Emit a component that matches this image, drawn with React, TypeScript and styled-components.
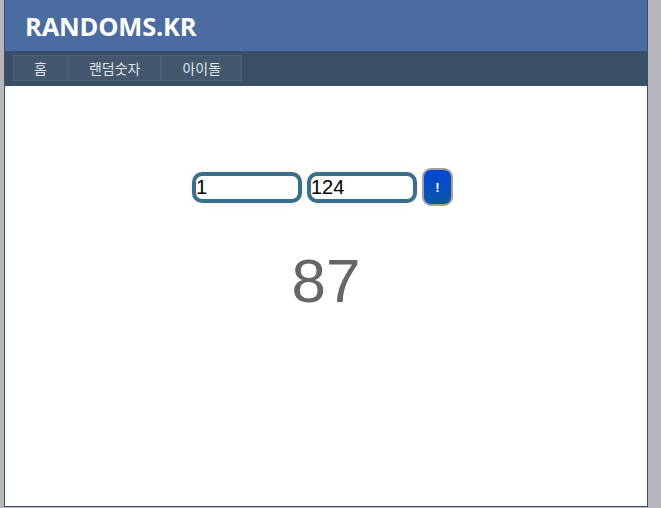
import React from 'react';
import styled, { createGlobalStyle } from 'styled-components';

const GlobalStyle = createGlobalStyle`
  html, body {
    margin: 0;
    padding: 0;
    background: #b6b6bc;
  }

  body {
    font-family: "Open Sans", "Noto Sans CJK KR", sans-serif;
  }
`;

const Frame = styled.div`
  box-sizing: border-box;
  width: 644px;
  height: 507px;
  margin-left: 4px;
  background: #ffffff;
  border: 1px solid #3b5069;
  border-top: none;
  display: flex;
  flex-direction: column;
`;

const Header = styled.header`
  height: 51px;
  background: #4a6ca0;
  display: flex;
  align-items: center;
  padding-left: 20px;
`;

const Title = styled.h1`
  margin: 0;
  color: #ffffff;
  font-family: "Open Sans", sans-serif;
  font-weight: 700;
  font-size: 25.5px;
  letter-spacing: -0.2px;
  padding-top: 1px;
`;

const Nav = styled.nav`
  height: 35px;
  background: #3a4f66;
  display: flex;
  align-items: flex-start;
  padding: 4px 8px 0;
  box-sizing: border-box;
`;

const Tab = styled.a`
  box-sizing: border-box;
  height: 26px;
  padding: 0 20px;
  display: flex;
  align-items: center;
  background: #44586d;
  border: 1px solid #4b6078;
  color: #dfe4ea;
  font-family: "Noto Sans CJK KR", sans-serif;
  font-size: 14px;
  text-decoration: none;
  cursor: pointer;
`;

const Content = styled.main`
  flex: 1;
  display: flex;
  flex-direction: column;
  align-items: center;
  padding-top: 82px;
`;

const Form = styled.div`
  display: flex;
  align-items: center;
  gap: 5px;
  margin-right: 7px;
`;

const NumberInput = styled.input`
  box-sizing: border-box;
  width: 110px;
  height: 31px;
  border: 4px solid #3b6e8a;
  border-radius: 10px;
  padding: 0;
  font-family: "Liberation Sans", Arial, sans-serif;
  font-size: 20px;
  color: #000000;
  outline: none;
  box-shadow: 0 0 8px rgba(0, 0, 0, 0.08);
`;

const GoButton = styled.button`
  box-sizing: border-box;
  width: 31px;
  height: 38px;
  border: 2px solid #a0a0a0;
  border-radius: 9px;
  background: linear-gradient(180deg, #0646d6 0%, #0a56a8 100%);
  color: #ffffff;
  font-family: "Liberation Sans", Arial, sans-serif;
  font-weight: 700;
  font-size: 13px;
  cursor: pointer;
  padding: 0;
`;

const Result = styled.div`
  margin-top: 39px;
  font-family: "Liberation Sans", Arial, sans-serif;
  font-size: 62px;
  color: #666666;
`;

export default function App() {
  return (
    <>
      <GlobalStyle />
      <Frame>
        <Header>
          <Title>RANDOMS.KR</Title>
        </Header>
        <Nav>
          <Tab>홈</Tab>
          <Tab>랜덤숫자</Tab>
          <Tab>아이돌</Tab>
        </Nav>
        <Content>
          <Form>
            <NumberInput type="text" defaultValue="1" />
            <NumberInput type="text" defaultValue="124" />
            <GoButton>!</GoButton>
          </Form>
          <Result>87</Result>
        </Content>
      </Frame>
    </>
  );
}
